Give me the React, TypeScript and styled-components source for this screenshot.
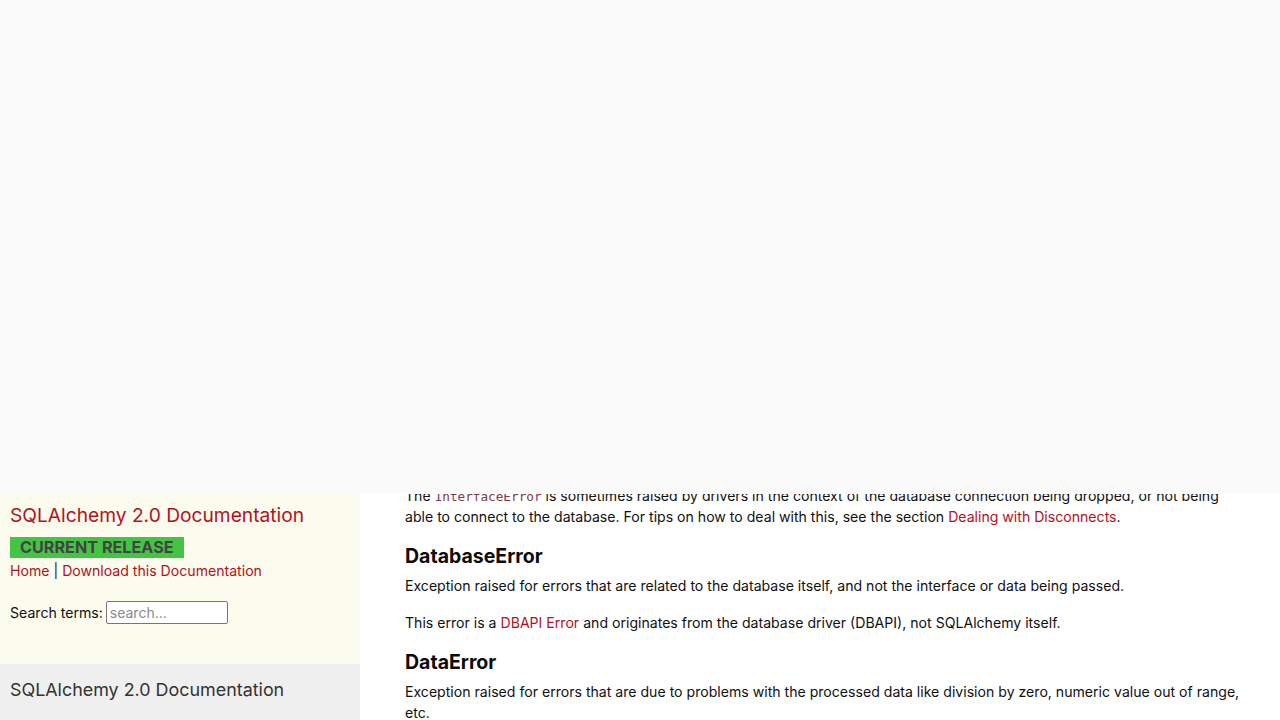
import React from "react";
import styled, { createGlobalStyle } from "styled-components";

const Global = createGlobalStyle`
  html, body { margin: 0; padding: 0; background: #ffffff; }
  body { font-family: "Inter", "Liberation Sans", sans-serif; color: #111; }
  * { box-sizing: border-box; }
`;

const Page = styled.div`
  width: 1280px;
  height: 720px;
  overflow: hidden;
  display: flex;
  flex-direction: column;
`;

const TopPanel = styled.div`
  height: 494px;
  flex: none;
  background: #fafafa;
`;

const Body = styled.div`
  flex: 1;
  display: flex;
  min-height: 0;
`;

const Sidebar = styled.aside`
  width: 360px;
  flex: none;
  display: flex;
  flex-direction: column;
`;

const SideTop = styled.div`
  height: 170px;
  background: #fcfcee;
  padding: 9px 10px 0;
`;

const SideTitle = styled.a`
  display: block;
  font-size: 19.2px;
  line-height: 24px;
  color: #b3111c;
  text-decoration: none;
`;

const Badge = styled.div`
  margin-top: 10px;
  width: 174px;
  height: 21px;
  background: #44c444;
  color: #434343;
  font-weight: 700;
  font-size: 16.2px;
  line-height: 21px;
  padding-left: 10px;
  white-space: nowrap;
`;

const NavLinks = styled.div`
  margin-top: 2px;
  font-size: 14.1px;
  line-height: 22px;
  color: #222;
`;

const RedLink = styled.a`
  color: #b3111c;
  text-decoration: none;
`;

const SearchRow = styled.form`
  margin-top: 19px;
  display: flex;
  align-items: center;
  font-size: 14.1px;
  color: #111;
  gap: 3px;
`;

const SearchInput = styled.input`
  width: 122px;
  height: 23px;
  border: 1px solid #767676;
  border-radius: 2px;
  padding: 0 3px;
  font-family: inherit;
  font-size: 14px;
  background: #fff;
  &::placeholder { color: #8a8a8a; }
`;

const SideBottom = styled.div`
  flex: 1;
  background: #efefef;
  padding: 14px 10px 0;
  font-size: 17.9px;
  line-height: 24px;
  color: #333;
`;

const Content = styled.main`
  flex: 1;
  overflow: hidden;
  padding: 0 37px 0 45px;
`;

const Para = styled.p`
  margin: 0 0 16px;
  font-size: 14.1px;
  line-height: 21px;
  color: #111;
  &:first-child { margin-top: -9.5px; }
`;

const Code = styled.code`
  font-family: "DejaVu Sans Mono", "Liberation Mono", monospace;
  font-size: 12.7px;
  line-height: 1;
  color: #7a3a4c;
`;

const Heading = styled.h3`
  margin: 15px 0 6px;
  font-size: 19.5px;
  line-height: 26px;
  font-weight: 700;
  color: #0d0a0a;
`;

export default function App() {
  return (
    <>
      <Global />
      <Page>
        <TopPanel />
        <Body>
          <Sidebar>
            <SideTop>
              <SideTitle href="#">SQLAlchemy 2.0 Documentation</SideTitle>
              <Badge>CURRENT RELEASE</Badge>
              <NavLinks>
                <RedLink href="#">Home</RedLink> | <RedLink href="#">Download this Documentation</RedLink>
              </NavLinks>
              <SearchRow onSubmit={(e) => e.preventDefault()}>
                <span>Search terms:</span>
                <SearchInput placeholder="search..." />
              </SearchRow>
            </SideTop>
            <SideBottom>SQLAlchemy 2.0 Documentation</SideBottom>
          </Sidebar>
          <Content>
            <Para>
              The <Code>InterfaceError</Code> is sometimes raised by drivers in the context of the database connection being dropped, or not being able to connect to the database. For tips on how to deal with this, see the section <RedLink href="#">Dealing with Disconnects</RedLink>.
            </Para>
            <Heading>DatabaseError</Heading>
            <Para>Exception raised for errors that are related to the database itself, and not the interface or data being passed.</Para>
            <Para>
              This error is a <RedLink href="#">DBAPI Error</RedLink> and originates from the database driver (DBAPI), not SQLAlchemy itself.
            </Para>
            <Heading>DataError</Heading>
            <Para>Exception raised for errors that are due to problems with the processed data like division by zero, numeric value out of range, etc.</Para>
          </Content>
        </Body>
      </Page>
    </>
  );
}
